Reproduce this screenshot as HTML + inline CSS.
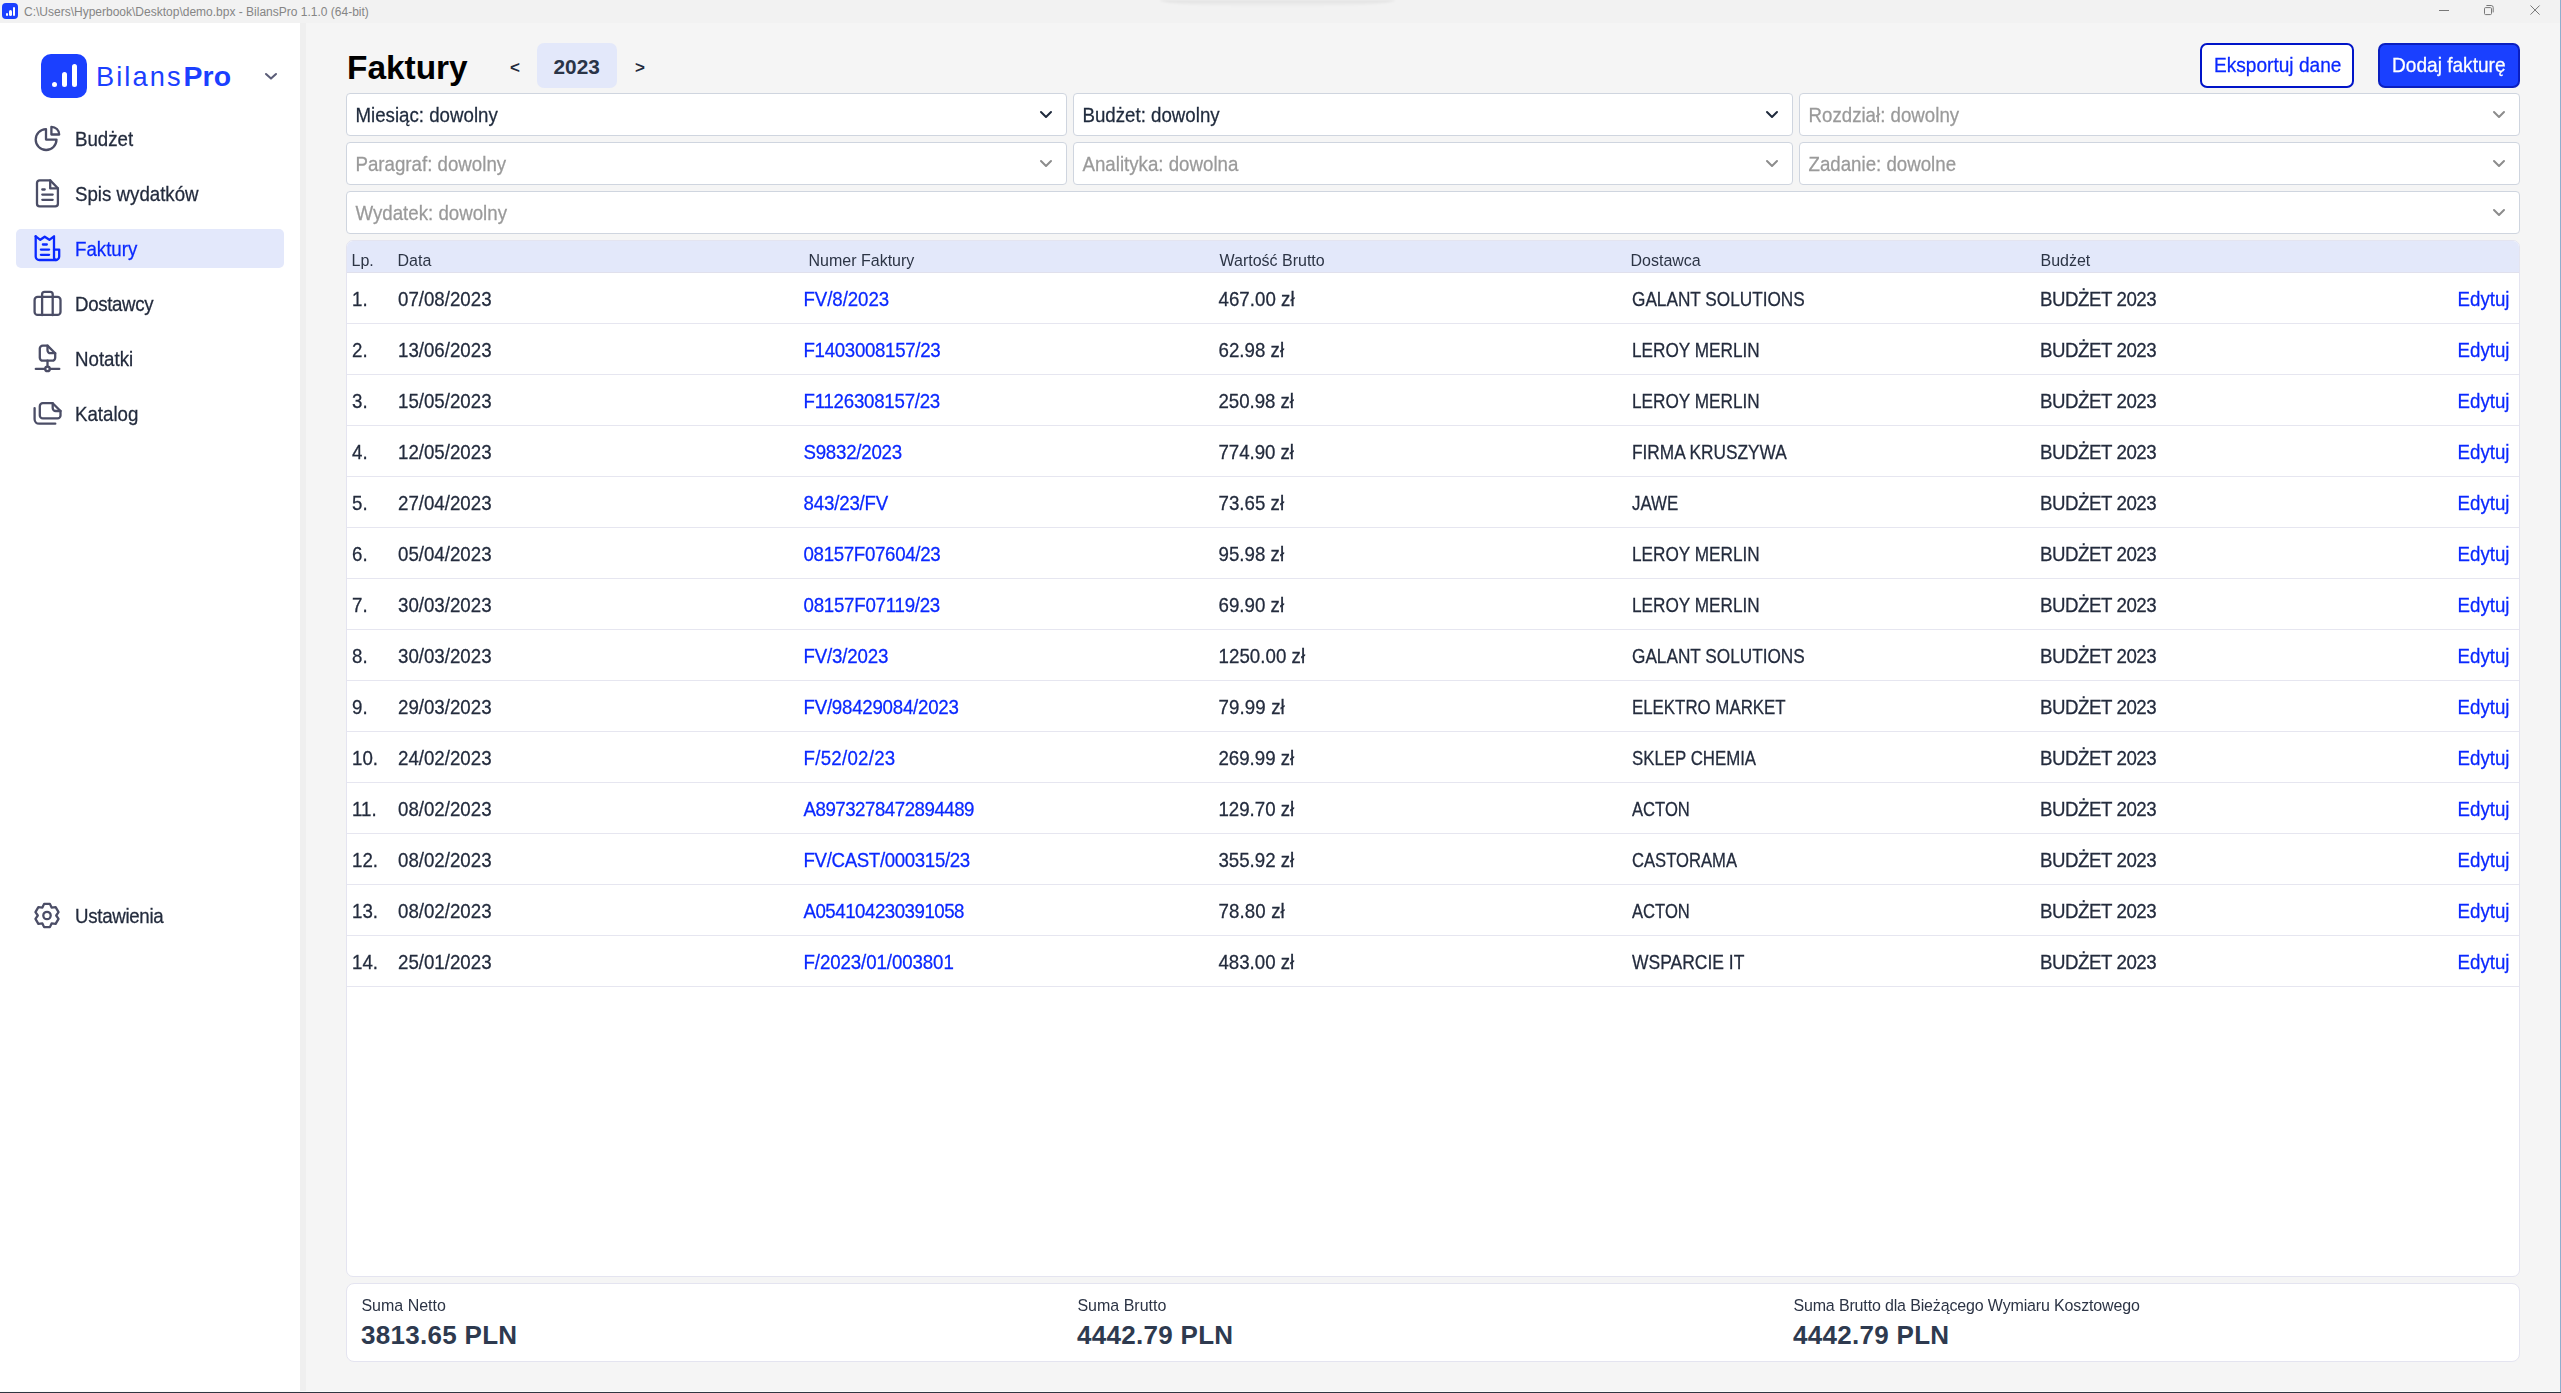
<!DOCTYPE html><html><head><meta charset="utf-8"><style>*{box-sizing:border-box;margin:0;padding:0}
html,body{width:2561px;height:1393px;overflow:hidden;background:#f5f5f5;font-family:"Liberation Sans",sans-serif;color:#232b3d}
.abs{position:absolute}
i{position:absolute;display:block;background:#fff;border-radius:3px}
.tx{font-size:18.7px;line-height:22px;white-space:nowrap;-webkit-text-stroke:0.25px currentColor;transform:scaleY(1.08);transform-origin:0 17.5px}
.tx16{font-size:16px;line-height:20px;white-space:nowrap;transform:scaleY(1.07);transform-origin:0 15.5px}
#titlebar{left:0;top:0;width:2561px;height:23px;background:#f2f2f2}
#tb-icon{left:2px;top:3px;width:16px;height:16px;background:#1b40ff;border-radius:4px}
#tb-text{left:24px;top:4px;font-size:12px;color:#858585;white-space:nowrap;line-height:16px}
#sidebar{left:0;top:23px;width:300px;height:1370px;background:#fff}
#sideborder{left:300px;top:23px;width:6px;height:1370px;background:#efefef}
#logo{left:41px;top:54px;width:46px;height:43.5px;background:#1b40ff;border-radius:10px}
#logotext{left:96px;top:58.9px;font-size:27.2px;line-height:34px;color:#1b40ff;letter-spacing:2.1px;white-space:nowrap}
#logotext b{letter-spacing:0.2px;font-size:28.4px;margin-left:0.8px}
.navsel{left:16px;width:268px;height:39px;border-radius:5px;background:#e3e8fb}
.lbl{left:75px;color:#232b3d}
.lbl.sel{color:#0a28ff}
.hdr-title{left:347px;top:48.2px;font-size:33.4px;font-weight:bold;color:#000;line-height:40px;white-space:nowrap}
.navarrow{font-size:17px;font-weight:bold;line-height:20px;color:#232b3d}
.pill{left:537px;top:43px;width:80px;height:45px;background:#e3e8fa;border-radius:7px}
.yr{left:553.5px;top:53.5px;font-size:20.8px;font-weight:bold;line-height:26px;color:#2a3447;white-space:nowrap}
#btn-export{left:2200px;top:43px;width:154px;height:45px;border:2px solid #0014c8;border-radius:7px;background:#fff;color:#0a28ff}
#btn-add{left:2378px;top:43px;width:142px;height:45px;border:2px solid #0a1fc0;border-radius:7px;background:#1a40ff;color:#fff}
.sel-box{position:absolute;height:43px;background:#fff;border:1px solid #cfd5df;border-radius:4px}
.sel-box .t{position:absolute;left:8.5px;top:10.5px;color:#1f2a3c}
.sel-box .t.ph{color:#9a9a9a}
#table{left:346px;top:240px;width:2174px;height:1037px;background:#fff;border:1px solid #e4e4f0;border-radius:7px;overflow:hidden}
#thead{position:absolute;left:0;top:0;width:100%;height:32px;background:#e3e8fa;border-bottom:1px solid #e0e0ec}
.th{position:absolute;top:9.5px;color:#2c3445}
.row{position:absolute;left:0;width:100%;height:51px;border-bottom:1px solid #e6e6f0}
.td{position:absolute;top:15.5px;color:#232b3d}
.td.link{color:#0a28ff}
.td.up{letter-spacing:-0.45px}
.td.sup{letter-spacing:-0.92px}
.sum-l.long{letter-spacing:-0.15px}
.bt{font-size:19.1px}
#summary{left:346px;top:1283px;width:2174px;height:79px;background:#fff;border:1px solid #e4e4f0;border-radius:8px}
.sum-l{position:absolute;top:11.5px;color:#2c3445}
.sum-v{position:absolute;top:36px;font-size:26px;line-height:30px;font-weight:bold;color:#2e3a4f;white-space:nowrap;letter-spacing:0.3px}
</style></head><body>
<div id="titlebar" class="abs"></div>
<div id="tb-icon" class="abs"><i style="left:3.6px;top:10.4px;width:2.6px;height:2.6px;border-radius:50%"></i><i style="left:7.3px;top:7px;width:2.4px;height:6px"></i><i style="left:10.9px;top:4px;width:2.4px;height:9px"></i></div>
<div class="abs" style="left:1160px;top:0;width:235px;height:7px;background:linear-gradient(rgba(0,0,0,0.065),rgba(0,0,0,0));border-radius:0 0 50% 50%/0 0 100% 100%;filter:blur(1px)"></div>
<div id="tb-text" class="abs">C:\Users\Hyperbook\Desktop\demo.bpx - BilansPro 1.1.0 (64-bit)</div>
<div class="abs" style="left:2439px;top:10px;width:10px;height:1px;background:#787878"></div>
<svg class="abs" style="left:2483px;top:4px" width="12" height="12" viewBox="0 0 12 12"><rect x="1.5" y="3.6" width="7" height="7" rx="1.1" fill="none" stroke="#787878" stroke-width="1"/><path d="M3.4 1.5H8.2A2 2 0 0 1 10.2 3.5V8.4" fill="none" stroke="#787878" stroke-width="1"/></svg>
<svg class="abs" style="left:2529px;top:4px" width="12" height="12" viewBox="0 0 12 12"><path d="M1.5 1.5L10.6 10.6M10.6 1.5L1.5 10.6" fill="none" stroke="#787878" stroke-width="1"/></svg>
<div id="sidebar" class="abs"></div><div id="sideborder" class="abs"></div>
<div id="logo" class="abs"><i style="left:10.7px;top:28.1px;width:5.3px;height:5.3px;border-radius:50%"></i><i style="left:20.8px;top:18px;width:5.2px;height:15.4px"></i><i style="left:30.8px;top:10.2px;width:5.2px;height:23.2px"></i></div>
<div id="logotext" class="abs">Bilans<b>Pro</b></div>
<svg class="abs" style="left:263px;top:70.5px" width="16" height="10.6" viewBox="0 0 16 10.6"><path d="M3 3L8.0 7.6L13 3" fill="none" stroke="#5b5d78" stroke-width="2.1" stroke-linecap="round" stroke-linejoin="round"/></svg>
<svg class="abs" style="left:30px;top:120px" width="40" height="40" viewBox="0 0 40 40" fill="none" stroke="#4b4d66" stroke-width="2.3" stroke-linecap="round" stroke-linejoin="round"><path d="M16 9.2A10.4 10.4 0 1 0 26.5 19.6H16Z"/><path d="M21.4 6.8V14.5H29.2A7.7 7.7 0 0 0 21.4 6.8Z"/></svg>
<div class="lbl tx abs" style="top:128.5px;letter-spacing:0px">Budżet</div>
<svg class="abs" style="left:30px;top:175px" width="40" height="40" viewBox="0 0 40 40" fill="none" stroke="#4b4d66" stroke-width="2.3" stroke-linecap="round" stroke-linejoin="round"><path d="M20.2 5.4H9.6A2.6 2.6 0 0 0 7 8V28.8A2.6 2.6 0 0 0 9.6 31.4H25.3A2.6 2.6 0 0 0 27.9 28.8V13.2Z"/><path d="M20.2 5.4V13.4H27.9"/><path d="M12.3 14.5H14.7"/><path d="M12.3 19.6H22.7"/><path d="M12.3 24.8H22.7"/></svg>
<div class="lbl tx abs" style="top:183.5px;letter-spacing:0px">Spis wydatków</div>
<div class="navsel abs" style="top:229px"></div>
<svg class="abs" style="left:30px;top:230px" width="40" height="40" viewBox="0 0 40 40" fill="none" stroke="#0a28ff" stroke-width="2.3" stroke-linecap="round" stroke-linejoin="round"><path d="M5.7 6.3V26.5A3.5 3.5 0 0 0 9.2 30H25.7A3.5 3.5 0 0 0 29.2 26.5V19.6H24"/><path d="M5.7 6.3L10.3 9.8L14.7 6.7L19.4 9.8L24 6.3V27.5A2.5 2.5 0 0 0 26.5 30"/><path d="M12.9 14.5H16.8"/><path d="M10.9 19.6H19.1"/><path d="M10.9 24.8H19.1"/></svg>
<div class="lbl tx abs sel" style="top:238.5px;letter-spacing:0px">Faktury</div>
<svg class="abs" style="left:28px;top:284px" width="40" height="40" viewBox="0 0 40 40" fill="none" stroke="#4b4d66" stroke-width="2.3" stroke-linecap="round" stroke-linejoin="round"><rect x="6.6" y="12.9" width="25.9" height="18" rx="3"/><path d="M14.1 12.9V10.3A2.5 2.5 0 0 1 16.6 7.8H22.2A2.5 2.5 0 0 1 24.7 10.3V12.9"/><path d="M14.1 12.9V31.2"/><path d="M24.7 12.9V31.2"/></svg>
<div class="lbl tx abs" style="top:293.5px;letter-spacing:-0.35px">Dostawcy</div>
<svg class="abs" style="left:28px;top:338px" width="40" height="40" viewBox="0 0 40 40" fill="none" stroke="#4b4d66" stroke-width="2.3" stroke-linecap="round" stroke-linejoin="round"><path d="M19.5 7.6H14.8A3 3 0 0 0 11.8 10.6V19.7A3 3 0 0 0 14.8 22.7H24.2A3 3 0 0 0 27.2 19.7V15.2L19.5 7.6Z"/><path d="M19.5 7.6V12.2A3 3 0 0 0 22.5 15.2H27.2"/><path d="M19.5 22.7V28.6"/><circle cx="19.5" cy="30.9" r="2.3"/><path d="M7.8 30.9H17.2"/><path d="M21.8 30.9H31.3"/></svg>
<div class="lbl tx abs" style="top:348.5px;letter-spacing:0px">Notatki</div>
<svg class="abs" style="left:28px;top:394px" width="40" height="40" viewBox="0 0 40 40" fill="none" stroke="#4b4d66" stroke-width="2.3" stroke-linecap="round" stroke-linejoin="round"><path d="M24.7 9.2H14.8A3 3 0 0 0 11.8 12.2V21.4A3 3 0 0 0 14.8 24.4H29.5A3 3 0 0 0 32.5 21.4V17Z"/><path d="M24.7 9.2V14A3 3 0 0 0 27.7 17H32.5"/><path d="M6.6 14.1V25.2A4.5 4.5 0 0 0 11.1 29.7H27.3"/></svg>
<div class="lbl tx abs" style="top:403.5px;letter-spacing:0px">Katalog</div>
<svg class="abs" style="left:28px;top:896px" width="40" height="40" viewBox="0 0 40 40" fill="none" stroke="#4b4d66" stroke-width="2.3" stroke-linecap="round" stroke-linejoin="round"><path d="M16.10 7.86L21.90 7.86L23.60 11.53L27.63 11.16L30.54 16.19L28.20 19.50L30.54 22.81L27.63 27.84L23.60 27.47L21.90 31.14L16.10 31.14L14.40 27.47L10.37 27.84L7.46 22.81L9.80 19.50L7.46 16.19L10.37 11.16L14.40 11.53Z"/><circle cx="19" cy="19.5" r="3.7"/></svg>
<div class="lbl tx abs" style="top:905.5px;letter-spacing:-0.3px">Ustawienia</div>
<div class="hdr-title abs">Faktury</div>
<div class="abs navarrow" style="left:510px;top:58px">&lt;</div>
<div class="pill abs"></div><div class="abs yr">2023</div>
<div class="abs navarrow" style="left:635px;top:58px">&gt;</div>
<div id="btn-export" class="abs"><div class="tx abs bt" style="left:12px;top:10.3px">Eksportuj dane</div></div>
<div id="btn-add" class="abs"><div class="tx abs bt" style="left:12px;top:10.3px">Dodaj fakturę</div></div>
<div class="sel-box" style="left:346px;top:93px;width:721px"><div class="t tx">Miesiąc: dowolny</div></div>
<svg class="abs" style="left:1038px;top:108.5px" width="16" height="11" viewBox="0 0 16 11"><path d="M3 3L8.0 8L13 3" fill="none" stroke="#1f2a3c" stroke-width="2.0" stroke-linecap="round" stroke-linejoin="round"/></svg>
<div class="sel-box" style="left:1073px;top:93px;width:720px"><div class="t tx">Budżet: dowolny</div></div>
<svg class="abs" style="left:1764px;top:108.5px" width="16" height="11" viewBox="0 0 16 11"><path d="M3 3L8.0 8L13 3" fill="none" stroke="#1f2a3c" stroke-width="2.0" stroke-linecap="round" stroke-linejoin="round"/></svg>
<div class="sel-box" style="left:1799px;top:93px;width:721px"><div class="t tx ph">Rozdział: dowolny</div></div>
<svg class="abs" style="left:2491px;top:108.5px" width="16" height="11" viewBox="0 0 16 11"><path d="M3 3L8.0 8L13 3" fill="none" stroke="#8c8c8c" stroke-width="2.0" stroke-linecap="round" stroke-linejoin="round"/></svg>
<div class="sel-box" style="left:346px;top:142px;width:721px"><div class="t tx ph">Paragraf: dowolny</div></div>
<svg class="abs" style="left:1038px;top:157.5px" width="16" height="11" viewBox="0 0 16 11"><path d="M3 3L8.0 8L13 3" fill="none" stroke="#8c8c8c" stroke-width="2.0" stroke-linecap="round" stroke-linejoin="round"/></svg>
<div class="sel-box" style="left:1073px;top:142px;width:720px"><div class="t tx ph">Analityka: dowolna</div></div>
<svg class="abs" style="left:1764px;top:157.5px" width="16" height="11" viewBox="0 0 16 11"><path d="M3 3L8.0 8L13 3" fill="none" stroke="#8c8c8c" stroke-width="2.0" stroke-linecap="round" stroke-linejoin="round"/></svg>
<div class="sel-box" style="left:1799px;top:142px;width:721px"><div class="t tx ph">Zadanie: dowolne</div></div>
<svg class="abs" style="left:2491px;top:157.5px" width="16" height="11" viewBox="0 0 16 11"><path d="M3 3L8.0 8L13 3" fill="none" stroke="#8c8c8c" stroke-width="2.0" stroke-linecap="round" stroke-linejoin="round"/></svg>
<div class="sel-box" style="left:346px;top:191px;width:2174px"><div class="t tx ph">Wydatek: dowolny</div></div>
<svg class="abs" style="left:2491px;top:206.5px" width="16" height="11" viewBox="0 0 16 11"><path d="M3 3L8.0 8L13 3" fill="none" stroke="#8c8c8c" stroke-width="2.0" stroke-linecap="round" stroke-linejoin="round"/></svg>
<div id="table" class="abs"><div id="thead">
<div class="th tx16" style="left:4.5px">Lp.</div>
<div class="th tx16" style="left:50.5px">Data</div>
<div class="th tx16" style="left:461.5px">Numer Faktury</div>
<div class="th tx16" style="left:872.5px">Wartość Brutto</div>
<div class="th tx16" style="left:1283.5px">Dostawca</div>
<div class="th tx16" style="left:1693.5px">Budżet</div>
</div>
<div class="row" style="top:32px">
<div class="td tx" style="left:5px">1.</div>
<div class="td tx" style="left:51px">07/08/2023</div>
<div class="td tx link" style="left:456.5px;letter-spacing:-0.075px">FV/8/2023</div>
<div class="td tx" style="left:871.5px;letter-spacing:0.028px">467.00 zł</div>
<div class="td tx" style="left:1284.5px;transform:scale(0.9205,1.08)">GALANT SOLUTIONS</div>
<div class="td tx up" style="left:1693px">BUDŻET 2023</div>
<div class="td tx link" style="right:9.5px">Edytuj</div>
</div>
<div class="row" style="top:83px">
<div class="td tx" style="left:5px">2.</div>
<div class="td tx" style="left:51px">13/06/2023</div>
<div class="td tx link" style="left:456.5px;letter-spacing:-0.321px">F1403008157/23</div>
<div class="td tx" style="left:871.5px;letter-spacing:0.028px">62.98 zł</div>
<div class="td tx" style="left:1284.5px;transform:scale(0.92,1.08)">LEROY MERLIN</div>
<div class="td tx up" style="left:1693px">BUDŻET 2023</div>
<div class="td tx link" style="right:9.5px">Edytuj</div>
</div>
<div class="row" style="top:134px">
<div class="td tx" style="left:5px">3.</div>
<div class="td tx" style="left:51px">15/05/2023</div>
<div class="td tx link" style="left:456.5px;letter-spacing:-0.244px">F1126308157/23</div>
<div class="td tx" style="left:871.5px;letter-spacing:-0.05px">250.98 zł</div>
<div class="td tx" style="left:1284.5px;transform:scale(0.92,1.08)">LEROY MERLIN</div>
<div class="td tx up" style="left:1693px">BUDŻET 2023</div>
<div class="td tx link" style="right:9.5px">Edytuj</div>
</div>
<div class="row" style="top:185px">
<div class="td tx" style="left:5px">4.</div>
<div class="td tx" style="left:51px">12/05/2023</div>
<div class="td tx link" style="left:456.5px;letter-spacing:-0.246px">S9832/2023</div>
<div class="td tx" style="left:871.5px;letter-spacing:-0.05px">774.90 zł</div>
<div class="td tx" style="left:1284.5px;transform:scale(0.9236,1.08)">FIRMA KRUSZYWA</div>
<div class="td tx up" style="left:1693px">BUDŻET 2023</div>
<div class="td tx link" style="right:9.5px">Edytuj</div>
</div>
<div class="row" style="top:236px">
<div class="td tx" style="left:5px">5.</div>
<div class="td tx" style="left:51px">27/04/2023</div>
<div class="td tx link" style="left:456.5px;letter-spacing:-0.175px">843/23/FV</div>
<div class="td tx" style="left:871.5px;letter-spacing:0.028px">73.65 zł</div>
<div class="td tx" style="left:1284.5px;transform:scale(0.9027,1.08)">JAWE</div>
<div class="td tx up" style="left:1693px">BUDŻET 2023</div>
<div class="td tx link" style="right:9.5px">Edytuj</div>
</div>
<div class="row" style="top:287px">
<div class="td tx" style="left:5px">6.</div>
<div class="td tx" style="left:51px">05/04/2023</div>
<div class="td tx link" style="left:456.5px;letter-spacing:-0.321px">08157F07604/23</div>
<div class="td tx" style="left:871.5px;letter-spacing:0.028px">95.98 zł</div>
<div class="td tx" style="left:1284.5px;transform:scale(0.92,1.08)">LEROY MERLIN</div>
<div class="td tx up" style="left:1693px">BUDŻET 2023</div>
<div class="td tx link" style="right:9.5px">Edytuj</div>
</div>
<div class="row" style="top:338px">
<div class="td tx" style="left:5px">7.</div>
<div class="td tx" style="left:51px">30/03/2023</div>
<div class="td tx link" style="left:456.5px;letter-spacing:-0.244px">08157F07119/23</div>
<div class="td tx" style="left:871.5px;letter-spacing:0.028px">69.90 zł</div>
<div class="td tx" style="left:1284.5px;transform:scale(0.92,1.08)">LEROY MERLIN</div>
<div class="td tx up" style="left:1693px">BUDŻET 2023</div>
<div class="td tx link" style="right:9.5px">Edytuj</div>
</div>
<div class="row" style="top:389px">
<div class="td tx" style="left:5px">8.</div>
<div class="td tx" style="left:51px">30/03/2023</div>
<div class="td tx link" style="left:456.5px;letter-spacing:-0.172px">FV/3/2023</div>
<div class="td tx" style="left:871.5px;letter-spacing:0.045px">1250.00 zł</div>
<div class="td tx" style="left:1284.5px;transform:scale(0.9205,1.08)">GALANT SOLUTIONS</div>
<div class="td tx up" style="left:1693px">BUDŻET 2023</div>
<div class="td tx link" style="right:9.5px">Edytuj</div>
</div>
<div class="row" style="top:440px">
<div class="td tx" style="left:5px">9.</div>
<div class="td tx" style="left:51px">29/03/2023</div>
<div class="td tx link" style="left:456.5px;letter-spacing:-0.239px">FV/98429084/2023</div>
<div class="td tx" style="left:871.5px;letter-spacing:0.112px">79.99 zł</div>
<div class="td tx" style="left:1284.5px;transform:scale(0.902,1.08)">ELEKTRO MARKET</div>
<div class="td tx up" style="left:1693px">BUDŻET 2023</div>
<div class="td tx link" style="right:9.5px">Edytuj</div>
</div>
<div class="row" style="top:491px">
<div class="td tx" style="left:5px">10.</div>
<div class="td tx" style="left:51px">24/02/2023</div>
<div class="td tx link" style="left:456.5px;letter-spacing:0.265px">F/52/02/23</div>
<div class="td tx" style="left:871.5px;letter-spacing:-0.025px">269.99 zł</div>
<div class="td tx" style="left:1284.5px;transform:scale(0.9005,1.08)">SKLEP CHEMIA</div>
<div class="td tx up" style="left:1693px">BUDŻET 2023</div>
<div class="td tx link" style="right:9.5px">Edytuj</div>
</div>
<div class="row" style="top:542px">
<div class="td tx" style="left:5px">11.</div>
<div class="td tx" style="left:51px">08/02/2023</div>
<div class="td tx link" style="left:456.5px;letter-spacing:-0.485px">A8973278472894489</div>
<div class="td tx" style="left:871.5px;letter-spacing:-0.025px">129.70 zł</div>
<div class="td tx" style="left:1284.5px;transform:scale(0.8891,1.08)">ACTON</div>
<div class="td tx up" style="left:1693px">BUDŻET 2023</div>
<div class="td tx link" style="right:9.5px">Edytuj</div>
</div>
<div class="row" style="top:593px">
<div class="td tx" style="left:5px">12.</div>
<div class="td tx" style="left:51px">08/02/2023</div>
<div class="td tx link" style="left:456.5px;letter-spacing:-0.36px">FV/CAST/000315/23</div>
<div class="td tx" style="left:871.5px;letter-spacing:-0.025px">355.92 zł</div>
<div class="td tx" style="left:1284.5px;transform:scale(0.8898,1.08)">CASTORAMA</div>
<div class="td tx up" style="left:1693px">BUDŻET 2023</div>
<div class="td tx link" style="right:9.5px">Edytuj</div>
</div>
<div class="row" style="top:644px">
<div class="td tx" style="left:5px">13.</div>
<div class="td tx" style="left:51px">08/02/2023</div>
<div class="td tx link" style="left:456.5px;letter-spacing:-0.492px">A054104230391058</div>
<div class="td tx" style="left:871.5px;letter-spacing:0.112px">78.80 zł</div>
<div class="td tx" style="left:1284.5px;transform:scale(0.8891,1.08)">ACTON</div>
<div class="td tx up" style="left:1693px">BUDŻET 2023</div>
<div class="td tx link" style="right:9.5px">Edytuj</div>
</div>
<div class="row" style="top:695px">
<div class="td tx" style="left:5px">14.</div>
<div class="td tx" style="left:51px">25/01/2023</div>
<div class="td tx link" style="left:456.5px;letter-spacing:-0.094px">F/2023/01/003801</div>
<div class="td tx" style="left:871.5px;letter-spacing:-0.025px">483.00 zł</div>
<div class="td tx" style="left:1284.5px;transform:scale(0.9358,1.08)">WSPARCIE IT</div>
<div class="td tx up" style="left:1693px">BUDŻET 2023</div>
<div class="td tx link" style="right:9.5px">Edytuj</div>
</div>
</div>
<div id="summary" class="abs">
<div class="sum-l tx16" style="left:14.4px">Suma Netto</div><div class="sum-v" style="left:13.9px">3813.65 PLN</div>
<div class="sum-l tx16" style="left:730.4px">Suma Brutto</div><div class="sum-v" style="left:729.9px">4442.79 PLN</div>
<div class="sum-l tx16 long" style="left:1446.4px">Suma Brutto dla Bieżącego Wymiaru Kosztowego</div><div class="sum-v" style="left:1445.9px">4442.79 PLN</div>
</div>
<div class="abs" style="left:2560px;top:0;width:1px;height:1393px;background:#8fb0cf"></div>
<div class="abs" style="left:0;top:1391px;width:2560px;height:1px;background:#fafafa"></div>
<div class="abs" style="left:0;top:1392px;width:2561px;height:1px;background:#2f3640"></div>
</body></html>
